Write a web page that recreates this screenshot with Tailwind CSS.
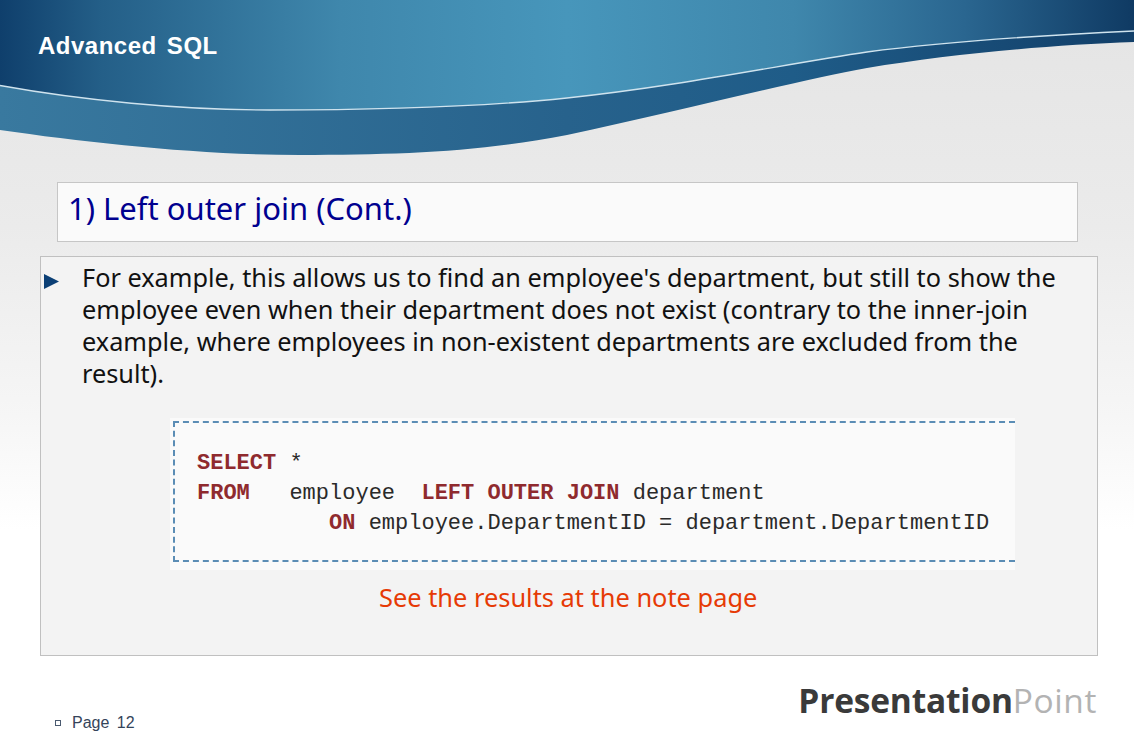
<!DOCTYPE html>
<html lang="en">
<head>
<meta charset="utf-8">
<title>Advanced SQL</title>
<script src="https://cdn.jsdelivr.net/npm/@tailwindcss/browser@4"></script>
</head>
<body class="w-[1134px] h-[756px] overflow-hidden bg-[linear-gradient(180deg,#e4e4e4_0%,#ebebeb_30%,#f6f6f6_55%,#ffffff_70%)]">
<header class="relative h-[182px]">
  <svg class="absolute left-0 top-0" width="1134" height="182" viewBox="0 0 1134 182" fill="none">
    <defs>
      <linearGradient id="top" x1="0" y1="0" x2="1134" y2="0" gradientUnits="userSpaceOnUse">
        <stop offset="0" stop-color="#0f3f6c"/>
        <stop offset="0.09" stop-color="#245f88"/>
        <stop offset="0.3" stop-color="#3f87ac"/>
        <stop offset="0.5" stop-color="#4796bb"/>
        <stop offset="0.7" stop-color="#3f87ac"/>
        <stop offset="0.85" stop-color="#2a6690"/>
        <stop offset="1" stop-color="#0f3a63"/>
      </linearGradient>
      <linearGradient id="band" x1="0" y1="0" x2="1134" y2="0" gradientUnits="userSpaceOnUse">
        <stop offset="0" stop-color="#39799f"/>
        <stop offset="0.5" stop-color="#27628c"/>
        <stop offset="0.7" stop-color="#1f5c88"/>
        <stop offset="1" stop-color="#123f69"/>
      </linearGradient>
    </defs>
    <path fill="url(#band)" d="M0 0H1134V42C1050 45 950 54 867 68C800 80 680 111 567 135C480 152 400 155 300 155C200 155 90 143 0 130Z"/>
    <path fill="url(#top)" d="M0 0H1134V31C1050 35 950 41 867 52C780 65 680 86 567 98C480 107 380 110 270 110C180 110 80 100 0 85.5Z"/>
    <path stroke="#cfe3ee" stroke-width="1.4" d="M0 85.5C80 100 180 110 270 110C380 110 480 107 567 98C680 86 780 65 867 52C950 41 1050 35 1134 31"/>
  </svg>
  <h1 class="relative pl-[38px] pt-[32px] font-['Liberation_Sans',sans-serif] font-bold text-[24px] leading-[28px] tracking-[0.5px] [word-spacing:3px] text-white">Advanced SQL</h1>
</header>

<section class="ml-[57px] w-[1021px] h-[60px] border border-[#c6c6c6] bg-[#fafafa] pl-[10px] pt-[4px]">
  <h2 class="font-['Noto_Sans',sans-serif] text-[31px] leading-[42px] text-[#00008f]">1) Left outer join (Cont.)</h2>
</section>

<section class="mt-[14px] ml-[40px] w-[1058px] h-[400px] border border-[#c0c0c0] bg-[#f3f3f3] flex flex-col">
  <div class="flex pt-[4px]">
    <svg class="ml-[3px] mt-[13px] shrink-0" width="15" height="15" viewBox="0 0 15 15"><path fill="#0b3f75" d="M0 0L15 7.5L0 15Z"/></svg>
    <p class="ml-[23px] w-[1000px] font-['Noto_Sans',sans-serif] text-[25.3px] leading-[32px] text-[#111]">For example, this allows us to find an employee's department, but still to show the employee even when their department does not exist (contrary to the inner-join example, where employees in non-existent departments are excluded from the result).</p>
  </div>
  <div class="relative ml-[129px] mt-[29px] w-[845px] h-[152px] bg-[#fafafa] pt-[3px] pl-[3px] pb-[8px]">
    <div class="h-full border-2 border-dashed border-[#5b8db5] border-r-0 pl-[22px] pt-[26px] font-['Liberation_Mono',monospace] text-[22px] leading-[30px] text-[#2a2a2a] whitespace-pre"><div><b class="text-[#8f2a2e]">SELECT</b> *</div><div><b class="text-[#8f2a2e]">FROM</b>   employee  <b class="text-[#8f2a2e]">LEFT OUTER JOIN</b> department</div><div>          <b class="text-[#8f2a2e]">ON</b> employee.DepartmentID = department.DepartmentID</div></div>
  </div>
  <p class="mt-[10px] ml-[338px] font-['Noto_Sans',sans-serif] text-[25.4px] leading-[34px] text-[#e63a05]">See the results at the note page</p>
</section>

<footer class="flex justify-between h-[100px] pl-[55px] pr-[37px]">
  <div class="flex items-center self-start mt-[55px] h-[24px]">
    <span class="w-[6px] h-[6px] border border-[#4a5a70]"></span>
    <span class="ml-[11px] font-['Liberation_Sans',sans-serif] text-[16px] [word-spacing:3px] text-[#34445a]">Page 12</span>
  </div>
  <div class="mt-[24px] h-[40px] font-['Open_Sans',sans-serif] text-[33.5px] leading-[40px] tracking-[-0.2px]"><span class="font-bold text-[#3a3a3a]">Presentation</span><span class="tracking-[0.6px] text-[#b3b3b3]">Point</span></div>
</footer>
</body>
</html>
